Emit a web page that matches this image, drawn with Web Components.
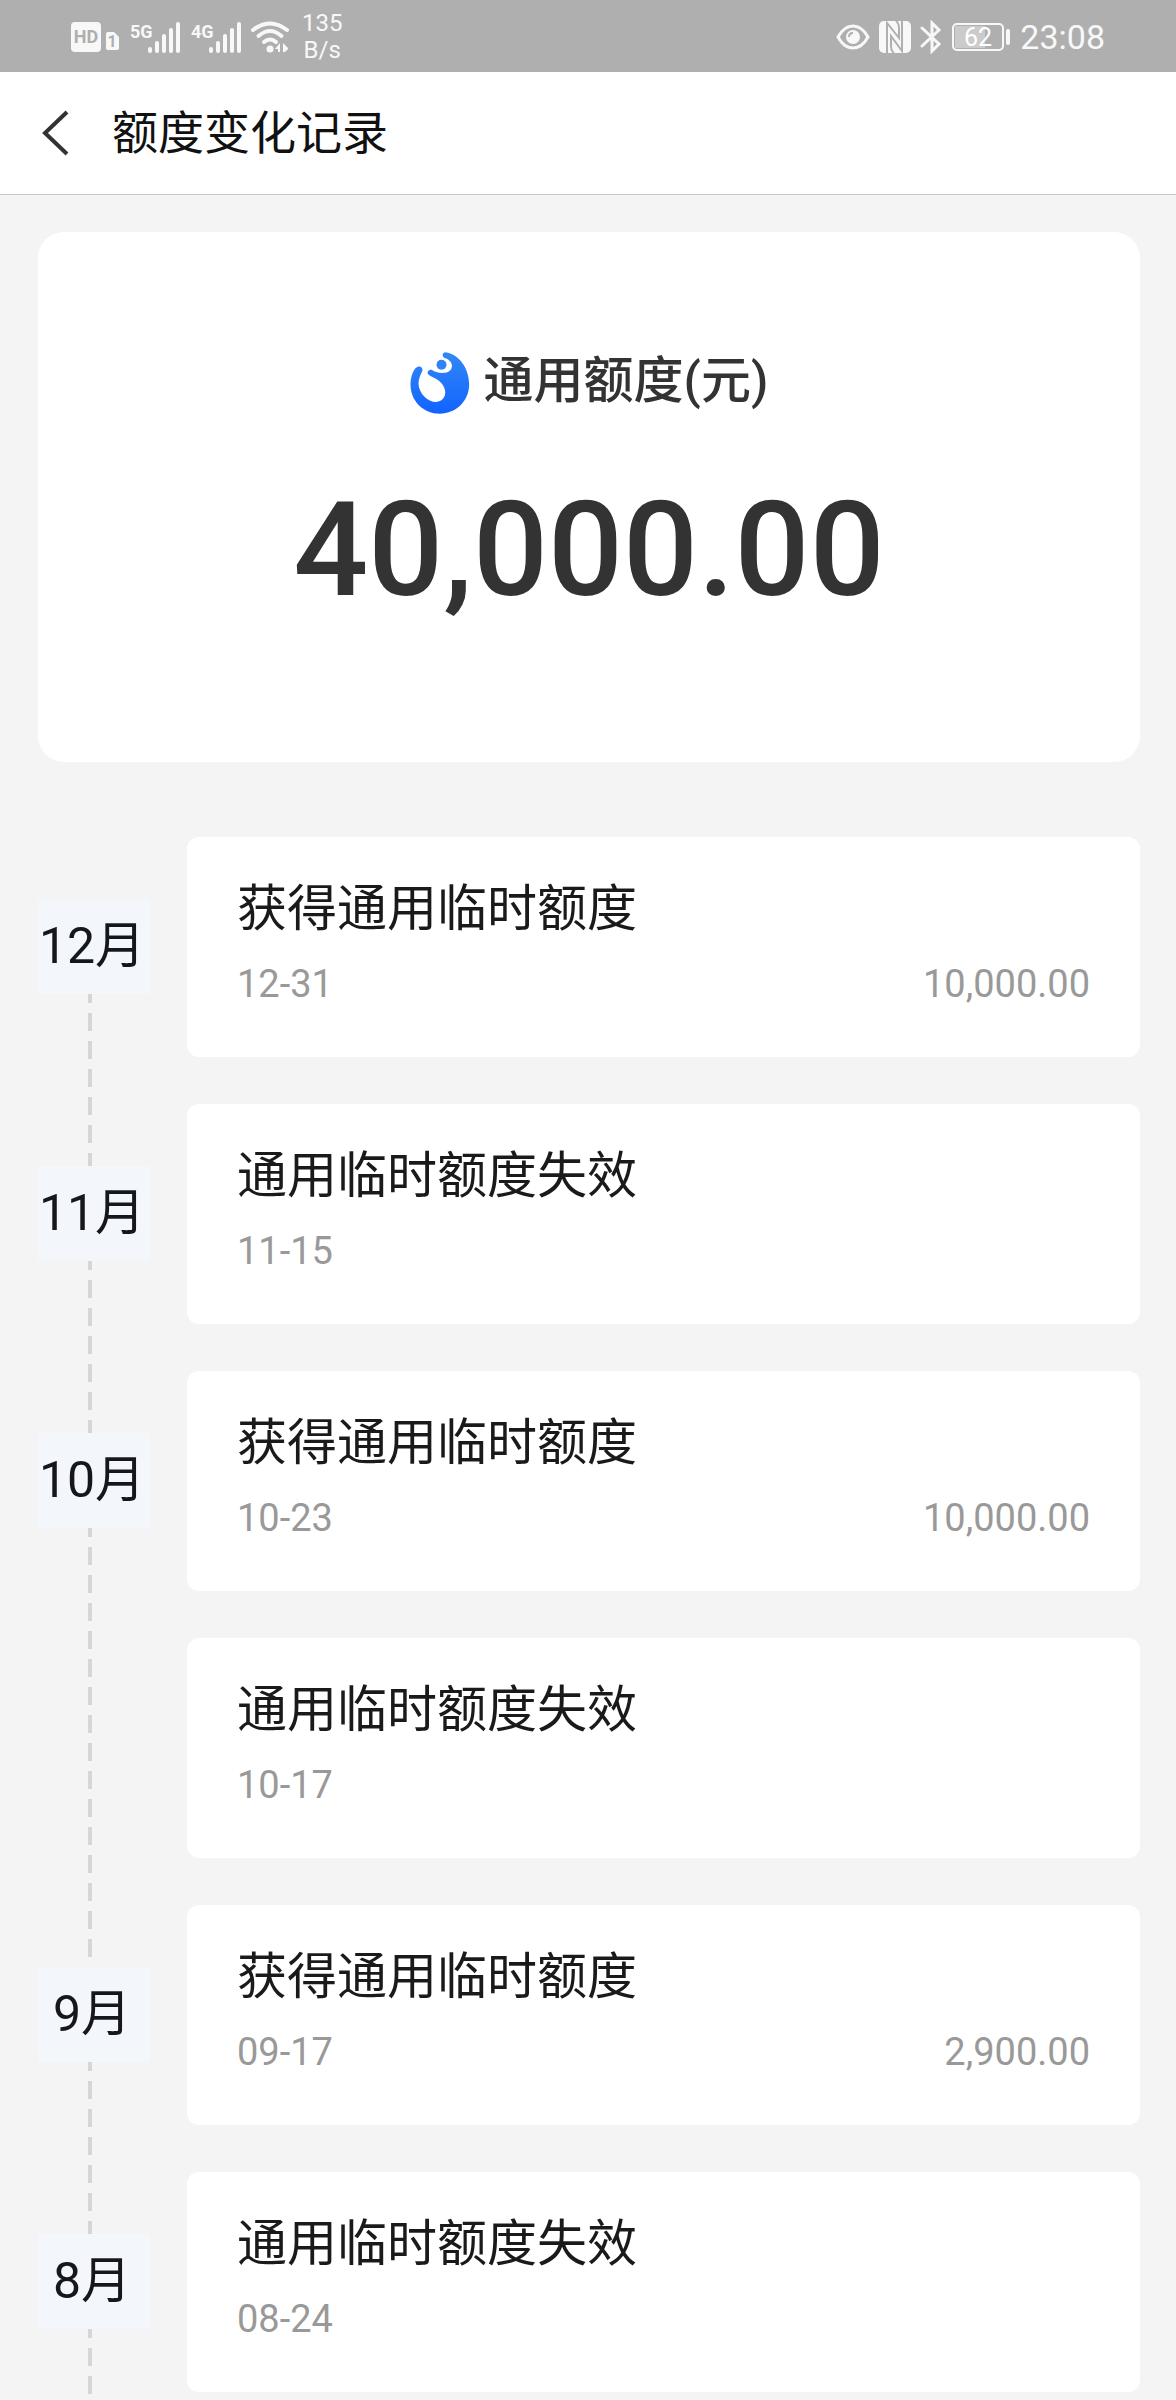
<!DOCTYPE html>
<html lang="zh-CN">
<head>
<meta charset="utf-8">
<meta name="viewport" content="width=device-width, initial-scale=1">
<title>额度变化记录</title>
<style>
    body {
        margin: 0;
        background: #f4f4f4;
        color: #1a1a1a;
        font-family: Roboto, "Noto Sans CJK SC", sans-serif;
    }
</style>
</head>
<body>
<quota-app>
    <status-bar slot="status" time="23:08" battery="62" speed="135"></status-bar>
    <page-header slot="header">额度变化记录</page-header>
    <quota-card amount="40,000.00">通用额度(元)</quota-card>
    <month-group month="12月">
        <quota-record date="12-31" amount="10,000.00">获得通用临时额度</quota-record>
    </month-group>
    <month-group month="11月">
        <quota-record date="11-15">通用临时额度失效</quota-record>
    </month-group>
    <month-group month="10月">
        <quota-record date="10-23" amount="10,000.00">获得通用临时额度</quota-record>
        <quota-record date="10-17">通用临时额度失效</quota-record>
    </month-group>
    <month-group month="9月">
        <quota-record date="09-17" amount="2,900.00">获得通用临时额度</quota-record>
    </month-group>
    <month-group month="8月">
        <quota-record date="08-24">通用临时额度失效</quota-record>
    </month-group>
</quota-app>

<script>
class QuotaApp extends HTMLElement {

    constructor() {
        super();
        this.shadowDOM = this.attachShadow({mode: "open"});
        this.shadowDOM.innerHTML = `
        <style>
            :host {
                display: flex;
                flex-direction: column;
                height: 100vh;
            }
            main {
                flex: 1;
                min-height: 0;
                overflow-y: auto;
                scrollbar-width: none;
                padding: 37px 36px 0 38px;
            }
        </style>
        <slot name="status"></slot>
        <slot name="header"></slot>
        <main><slot></slot></main>
        `;
    }
}

class StatusBar extends HTMLElement {

    constructor() {
        super();
        this.shadowDOM = this.attachShadow({mode: "open"});
    }

    connectedCallback() {
        this.render();
    }

    signal(name) {
        return `
        <svg width="52" height="38" viewBox="0 0 52 38" fill="currentColor">
            <text x="1" y="20" font-size="18" font-weight="700">${name}</text>
            <rect x="19" y="29" width="4" height="6" rx="2"/>
            <rect x="26" y="23" width="4" height="12" rx="2"/>
            <rect x="33" y="16" width="4" height="19" rx="2"/>
            <rect x="40" y="10" width="4" height="25" rx="2"/>
            <rect x="47" y="4" width="4" height="31" rx="2"/>
        </svg>`;
    }

    render() {
        this.shadowDOM.innerHTML = `
        <style>
            :host {
                display: flex;
                justify-content: space-between;
                align-items: center;
                height: 72px;
                padding: 2px 71px 0;
                box-sizing: border-box;
                background: #afafaf;
                color: #f8f8f8;
            }
            .side {
                display: flex;
                align-items: center;
                gap: 9px;
            }
            svg {
                display: block;
            }
            .speed {
                font-size: 24px;
                line-height: 27px;
                padding-left: 4px;
                text-align: center;
            }
            .time {
                font-size: 34px;
                line-height: 40px;
            }
        </style>
        <div class="side">
            <svg width="49" height="32" viewBox="0 0 49 32">
                <rect x="0" y="1" width="30" height="30" rx="4" fill="currentColor"/>
                <text x="15" y="22" text-anchor="middle" font-size="18" font-weight="700" fill="#afafaf">HD</text>
                <path d="M37 11H43L48 16V27Q48 29 46 29H37Q35 29 35 27V13Q35 11 37 11Z" fill="currentColor"/>
                <text x="41" y="26" text-anchor="middle" font-size="16" font-weight="700" fill="#afafaf">1</text>
            </svg>
            ${this.signal("5G")}
            ${this.signal("4G")}
            <svg width="38" height="32" viewBox="0 0 38 32" fill="none" stroke="currentColor" stroke-width="4" stroke-linecap="round">
                <path d="M2 9Q19-4 36 9"/>
                <path d="M7.500 15Q19 5 30.500 15"/>
                <path d="M13 21Q19 16 25 21"/>
                <circle cx="19" cy="28" r="3.500" fill="currentColor" stroke="none"/>
                <path d="M24 28L29 22V31H27V28ZM32 22L37 27V28L34 31H32Z" fill="currentColor" stroke="none"/>
            </svg>
            <div class="speed">${this.getAttribute("speed")}<br>B/s</div>
        </div>
        <div class="side">
            <svg width="34" height="26" viewBox="0 0 34 26" fill="none" stroke="currentColor" stroke-width="3">
                <path d="M2 13Q8 2 17 2T32 13Q26 24 17 24T2 13Z"/>
                <circle cx="17" cy="13" r="7" fill="currentColor" stroke="none"/>
                <path d="M13 13Q13 9 17 9" stroke="#afafaf" stroke-width="2"/>
            </svg>
            <svg width="32" height="32" viewBox="0 0 32 32">
                <rect width="32" height="32" rx="5" fill="currentColor"/>
                <path d="M8 32V2L20 17V7Q20 2 17 0" fill="none" stroke="#afafaf" stroke-width="2"/>
                <path d="M23 0V30L12 15V25Q12 30 15 32" fill="none" stroke="#afafaf" stroke-width="2"/>
            </svg>
            <svg width="22" height="34" viewBox="0 0 22 34" fill="none" stroke="currentColor" stroke-width="3">
                <path d="M2 8L19 24L12 31V3L19 10L2 26" stroke-linecap="round"/>
            </svg>
            <svg width="60" height="30" viewBox="0 0 60 30">
                <rect x="4" y="4" width="30" height="22" fill="#cbcbcb"/>
                <rect x="2" y="2" width="50" height="26" rx="4" fill="none" stroke="currentColor" stroke-width="2"/>
                <rect x="55" y="7" width="4" height="16" rx="2" fill="currentColor"/>
                <text x="27" y="24" text-anchor="middle" font-size="25" fill="#fff">${this.getAttribute("battery")}</text>
            </svg>
            <div class="time">${this.getAttribute("time")}</div>
        </div>
        `;
    }
}

class PageHeader extends HTMLElement {

    constructor() {
        super();
        this.shadowDOM = this.attachShadow({mode: "open"});
        this.shadowDOM.innerHTML = `
        <style>
            :host {
                display: flex;
                align-items: center;
                gap: 31px;
                height: 123px;
                padding: 0 29px;
                box-sizing: border-box;
                background: #fff;
                border-bottom: 1px solid #c8c8c8;
            }
            button {
                display: flex;
                padding: 0 12px;
                border: 0;
                background: none;
                color: #333;
            }
            h1 {
                margin: 0;
                font-size: 46px;
                font-weight: 400;
                line-height: 68px;
                color: #111;
            }
        </style>
        <button type="button" aria-label="返回">
            <svg width="28" height="46" viewBox="0 0 28 46" fill="none" stroke="currentColor" stroke-width="4">
                <path d="M26 2L4 23L26 44"/>
            </svg>
        </button>
        <h1><slot></slot></h1>
        `;
    }
}

class QuotaCard extends HTMLElement {

    constructor() {
        super();
        this.shadowDOM = this.attachShadow({mode: "open"});
    }

    connectedCallback() {
        this.render();
    }

    render() {
        this.shadowDOM.innerHTML = `
        <style>
            :host {
                display: flex;
                flex-direction: column;
                align-items: center;
                gap: 36px;
                padding: 112px 0 116px;
                margin-bottom: 75px;
                background: #fff;
                border-radius: 26px;
                color: #333;
            }
            h2 {
                display: flex;
                align-items: center;
                gap: 14px;
                margin: 0;
                font-size: 50px;
                font-weight: 500;
                line-height: 74px;
            }
            svg {
                margin-top: 4px;
            }
            .amount {
                font-size: 132px;
                font-weight: 500;
                line-height: 192px;
            }
        </style>
        <h2>
            <svg width="60" height="62" viewBox="27 37 177 186">
                <defs>
                    <linearGradient id="drop" x1="0" y1="0" x2="0" y2="1">
                        <stop offset="0" stop-color="#3388f5"/>
                        <stop offset="1" stop-color="#1263ff"/>
                    </linearGradient>
                </defs>
                <path fill="url(#drop)" d="M62 95C66 86 58 79 49 81C38 84 28 106 27 132C26 184 66 222 115 222C164 222 203 184 203 134C203 85 172 44 132 38C122 38 121 50 128 54C146 60 155 72 150 86C146 97 134 100 122 100C110 100 98 96 92 91C83 87 75 97 80 104C88 112 112 118 124 136C138 158 132 184 104 187C78 187 52 160 51 132C51 118 57 106 62 95Z"/>
                <circle cx="120" cy="75" r="15" fill="#2f83f6"/>
            </svg>
            <span><slot></slot></span>
        </h2>
        <div class="amount">${this.getAttribute("amount")}</div>
        `;
    }
}

class MonthGroup extends HTMLElement {

    constructor() {
        super();
        this.shadowDOM = this.attachShadow({mode: "open"});
    }

    connectedCallback() {
        this.render();
    }

    render() {
        this.shadowDOM.innerHTML = `
        <style>
            :host {
                --label-top: 62px;
                display: grid;
                grid-template-columns: 112px 1fr;
                column-gap: 37px;
            }
            .rail {
                display: flex;
                flex-direction: column;
                align-items: center;
                padding-top: var(--label-top);
            }
            h3 {
                align-self: stretch;
                margin: 0;
                padding-right: 4px;
                background: #f3f6fb;
                font-size: 50px;
                font-weight: 400;
                line-height: 95px;
                text-align: center;
                white-space: nowrap;
                color: #16171c;
            }
            /* runs on to the label of the next month */
            .line {
                flex: 1;
                width: 4px;
                margin-right: 8px;
                margin-bottom: calc(-1 * var(--label-top));
                background: repeating-linear-gradient(#d6d6d6 0 9px, transparent 9px 19px, #d6d6d6 19px 28px);
            }
            .records {
                display: flex;
                flex-direction: column;
                gap: 47px;
                padding-bottom: 47px;
            }
        </style>
        <div class="rail">
            <h3>${this.getAttribute("month")}</h3>
            <div class="line"></div>
        </div>
        <div class="records"><slot></slot></div>
        `;
    }
}

class QuotaRecord extends HTMLElement {

    constructor() {
        super();
        this.shadowDOM = this.attachShadow({mode: "open"});
    }

    connectedCallback() {
        this.render();
    }

    render() {
        this.shadowDOM.innerHTML = `
        <style>
            :host {
                display: block;
                padding: 35px 50px 45px;
                background: #fff;
                border-radius: 12px;
            }
            .title {
                font-size: 50px;
                line-height: 74px;
            }
            .detail {
                display: flex;
                justify-content: space-between;
                padding-top: 10px;
                font-size: 38px;
                line-height: 56px;
                color: #999;
            }
        </style>
        <div class="title"><slot></slot></div>
        <div class="detail">
            <span>${this.getAttribute("date")}</span>
            <span>${this.getAttribute("amount") || ""}</span>
        </div>
        `;
    }
}

customElements.define("quota-app", QuotaApp);
customElements.define("status-bar", StatusBar);
customElements.define("page-header", PageHeader);
customElements.define("quota-card", QuotaCard);
customElements.define("month-group", MonthGroup);
customElements.define("quota-record", QuotaRecord);
</script>
</body>
</html>
